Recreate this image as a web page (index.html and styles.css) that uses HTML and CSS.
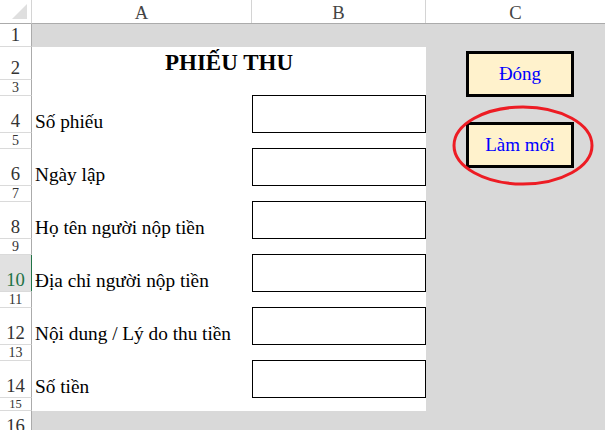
FILE: index.html
```html
<!DOCTYPE html>
<html lang="vi">
<head>
  <meta charset="UTF-8">
  <title>Phiếu thu</title>
  <link rel="stylesheet" href="styles.css">
</head>
<body>

<div class="sheet">
  <div class="corner"><span class="corner-mark"></span></div>

  <div class="col-heads">
    <div class="col-head col-a">A</div>
    <div class="col-head col-b">B</div>
    <div class="col-head col-c">C</div>
  </div>

  <div class="row-heads">
    <div class="row-head row-top">1</div>
    <div class="row-head row-title">2</div>
    <div class="row-head row-gap">3</div>
    <div class="row-head row-field">4</div>
    <div class="row-head row-gap">5</div>
    <div class="row-head row-field">6</div>
    <div class="row-head row-gap">7</div>
    <div class="row-head row-field">8</div>
    <div class="row-head row-gap">9</div>
    <div class="row-head row-field active">10</div>
    <div class="row-head row-gap">11</div>
    <div class="row-head row-field">12</div>
    <div class="row-head row-gap">13</div>
    <div class="row-head row-field">14</div>
    <div class="row-head row-end">15</div>
    <div class="row-head row-last">16</div>
  </div>

  <div class="main">
    <div class="form">
      <div class="title">PHIẾU THU</div>

      <div class="field">
        <div class="label">Số phiếu</div>
        <div class="box"></div>
      </div>
      <div class="field">
        <div class="label">Ngày lập</div>
        <div class="box"></div>
      </div>
      <div class="field">
        <div class="label">Họ tên người nộp tiền</div>
        <div class="box"></div>
      </div>
      <div class="field">
        <div class="label">Địa chỉ người nộp tiền</div>
        <div class="box"></div>
      </div>
      <div class="field">
        <div class="label">Nội dung / Lý do thu tiền</div>
        <div class="box"></div>
      </div>
      <div class="field">
        <div class="label">Số tiền</div>
        <div class="box"></div>
      </div>
    </div>

    <div class="actions">
      <button class="btn">Đóng</button>
      <div class="btn-wrap">
        <button class="btn">Làm mới</button>
        <svg class="ring" width="142" height="81" viewBox="0 0 142 81">
          <ellipse cx="71" cy="40.5" rx="69" ry="38.5" fill="none" stroke="#ed1c24" stroke-width="3"/>
        </svg>
      </div>
    </div>
  </div>
</div>

</body>
</html>
```

FILE: styles.css
```css
body {
  margin: 0;
  height: 430px;
  overflow: hidden;
  font-family: "Liberation Serif", "Times New Roman", serif;
  background-color: #fff;
}
.sheet {
  display: grid;
  grid-template-columns: 32px 1fr;
  grid-template-rows: 24px 1fr;
  height: 430px;
}
.corner {
  display: flex;
  justify-content: flex-end;
  align-items: flex-end;
  padding: 0 4px 4px 0;
  border-right: 1px solid #d4d4d4;
  border-bottom: 1px solid #ababab;
  box-sizing: border-box;
}
.corner-mark {
  width: 0;
  height: 0;
  border-left: 15px solid transparent;
  border-bottom: 15px solid #dfdfdf;
}
.col-heads {
  display: flex;
  border-bottom: 1px solid #ababab;
}
.col-head {
  box-sizing: border-box;
  text-align: center;
  font-size: 18.67px;
  line-height: 23px;
  padding-top: 1px;
  color: #444;
  border-right: 1px solid #d4d4d4;
}
.col-a { width: 220px; }
.col-b { width: 174px; }
.col-c { flex: 1; border-right: none; }

.row-heads {
  display: flex;
  flex-direction: column;
}
.row-head {
  box-sizing: border-box;
  display: flex;
  justify-content: center;
  align-items: flex-end;
  overflow: hidden;
  font-size: 18.67px;
  line-height: 19px;
  padding-bottom: 2px;
  color: #333;
  border-right: 1px solid #ababab;
  border-bottom: 1px solid #dadada;
  flex-shrink: 0;
}
.row-top { height: 23px; }
.row-title { height: 33px; }
.row-gap {
  height: 16px;
  font-size: 14px;
  line-height: 14px;
  padding-bottom: 0;
}
.row-field { height: 37px; }
.row-end {
  height: 13px;
  font-size: 12.5px;
  line-height: 12px;
  padding-bottom: 0;
}
.row-last { height: 26px; border-bottom: none; }
.row-head.active {
  background-color: #e1e1e1;
  color: #217346;
  border-right: 2px solid #217346;
  width: 33px;
}

.main {
  display: flex;
  align-items: flex-start;
  background-color: #d9d9d9;
}
.form {
  width: 394px;
  margin-top: 23px;
  padding-bottom: 13px;
  background-color: #fff;
}
.title {
  height: 33px;
  line-height: 31px;
  text-align: center;
  font-size: 23px;
  font-weight: bold;
}
.field {
  display: flex;
  height: 37px;
  margin-top: 16px;
}
.label {
  width: 220px;
  align-self: flex-end;
  padding: 0 0 2px 3px;
  box-sizing: border-box;
  font-size: 19.3px;
  line-height: 19px;
  white-space: nowrap;
}
.box {
  width: 174px;
  margin-top: -1px;
  border: 1px solid #000;
  box-sizing: border-box;
}

.actions {
  display: flex;
  flex-direction: column;
  gap: 25px;
  padding: 27px 0 0 40px;
}
.btn {
  width: 108px;
  height: 46px;
  border: 3px solid #000;
  background-color: #fff2cc;
  color: #0000ff;
  font-family: "Liberation Serif", "Times New Roman", serif;
  font-size: 19px;
  padding: 0;
  display: block;
}
.btn-wrap {
  position: relative;
}
.ring {
  position: absolute;
  left: -14px;
  top: -17px;
  pointer-events: none;
}
```
